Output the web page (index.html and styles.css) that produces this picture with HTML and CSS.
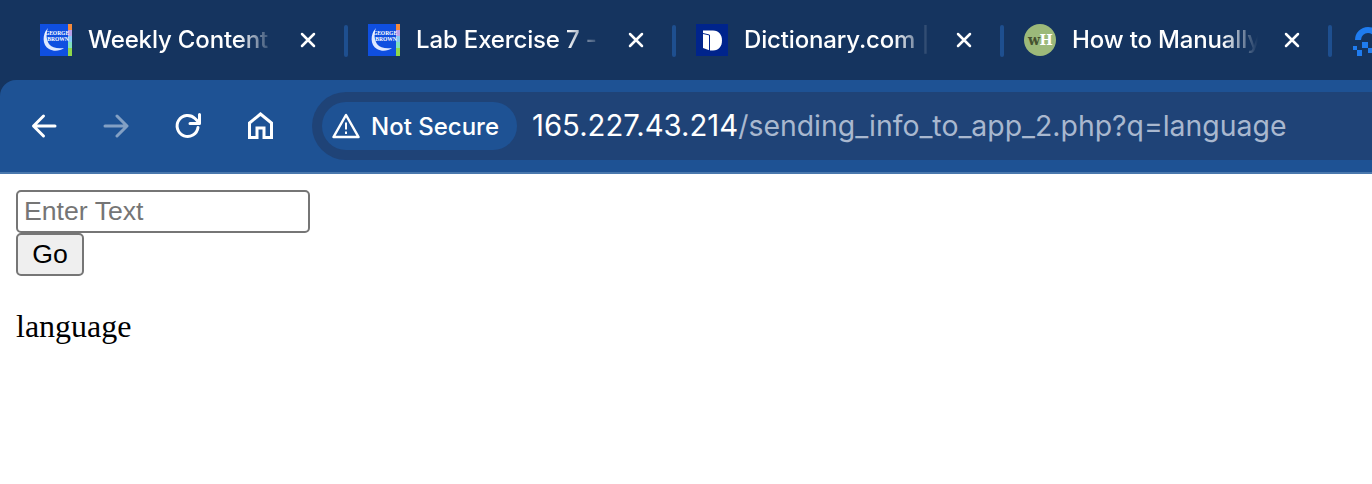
FILE: index.html
```html
<!DOCTYPE html>
<html lang="en">
<head>
  <meta charset="UTF-8" />
  <title>Sending info to app</title>
  <link rel="stylesheet" href="styles.css">
</head>
<body>

<div class="browser">
  <div class="tabs">
    <div class="tab">
      <svg class="favicon" viewBox="0 0 32 32">
        <rect width="32" height="32" fill="#0f4fe0"/>
        <rect x="28" width="4" height="6" fill="#f58a3c"/>
        <rect x="28" y="6" width="4" height="6" fill="#b9a0e8"/>
        <rect x="28" y="12" width="4" height="6" fill="#86c8f5"/>
        <rect x="28" y="18" width="4" height="6" fill="#7fe0c0"/>
        <rect x="28" y="24" width="4" height="8" fill="#8fd84a"/>
        <path d="M8 4C2 10 2 21 9 25c5 3 11 2 15-1-6 1-12 0-15-4C6 15 6 9 8 4z" fill="#dfe9ff"/>
        <text x="17" y="11" class="favicon-mark">GEORGE</text>
        <text x="18" y="17" class="favicon-mark">BROWN</text>
      </svg>
      <span class="tab-title">Weekly Content</span>
      <svg class="tab-close" viewBox="0 0 16 16"><path d="M2 2l12 12M14 2L2 14"/></svg>
    </div>
    <div class="tab">
      <svg class="favicon" viewBox="0 0 32 32">
        <rect width="32" height="32" fill="#0f4fe0"/>
        <rect x="28" width="4" height="6" fill="#f58a3c"/>
        <rect x="28" y="6" width="4" height="6" fill="#b9a0e8"/>
        <rect x="28" y="12" width="4" height="6" fill="#86c8f5"/>
        <rect x="28" y="18" width="4" height="6" fill="#7fe0c0"/>
        <rect x="28" y="24" width="4" height="8" fill="#8fd84a"/>
        <path d="M8 4C2 10 2 21 9 25c5 3 11 2 15-1-6 1-12 0-15-4C6 15 6 9 8 4z" fill="#dfe9ff"/>
        <text x="17" y="11" class="favicon-mark">GEORGE</text>
        <text x="18" y="17" class="favicon-mark">BROWN</text>
      </svg>
      <span class="tab-title">Lab Exercise 7 - Sending</span>
      <svg class="tab-close" viewBox="0 0 16 16"><path d="M2 2l12 12M14 2L2 14"/></svg>
    </div>
    <div class="tab">
      <svg class="favicon" viewBox="0 0 32 32">
        <rect width="32" height="32" fill="#00248c"/>
        <path d="M7 6.500H17C23 6.500 26 11 26 16.500S23 26.500 17 26.500H14L7 24z" fill="#fff"/>
        <path d="M7 9.500L13.500 11V27" fill="none" stroke="#00248c" stroke-width="1"/>
      </svg>
      <span class="tab-title">Dictionary.com | Meanings</span>
      <svg class="tab-close" viewBox="0 0 16 16"><path d="M2 2l12 12M14 2L2 14"/></svg>
    </div>
    <div class="tab">
      <svg class="favicon" viewBox="0 0 32 32">
        <circle cx="16" cy="16" r="16" fill="#9cb97a"/>
        <text x="10" y="21" class="wh-mark wh-dark">w</text>
        <text x="22" y="21" class="wh-mark wh-light">H</text>
      </svg>
      <span class="tab-title">How to Manually Install</span>
      <svg class="tab-close" viewBox="0 0 16 16"><path d="M2 2l12 12M14 2L2 14"/></svg>
    </div>
    <div class="tab">
      <svg class="favicon" viewBox="0 0 32 32">
        <path d="M3 16A13 13 0 0 1 29 16h-6A7 7 0 0 0 9 16z" fill="#1f7cf0"/>
        <path d="M1 22h4v4H1zM5 26h5v6H5zM10 18h6v6h-6zM16 24h5v5h-5z" fill="#1f7cf0"/>
      </svg>
    </div>
  </div>

  <div class="toolbar">
    <svg class="nav-icon" viewBox="0 0 28 28"><path d="M25 14H4.500M13.500 4L3.500 14l10 10"/></svg>
    <svg class="nav-icon nav-off" viewBox="0 0 28 28"><path d="M3 14h21M15 4l10 10-10 10"/></svg>
    <svg class="nav-icon" viewBox="0 0 28 28"><path d="M24 15.500A10.500 10.500 0 1 1 21 6.500L25 10.500"/><path d="M25.500 2.500V11.500H16"/></svg>
    <svg class="nav-icon nav-home" viewBox="0 0 28 28"><path d="M14.500 2L3.500 11V25.500H11V16H18V25.500H25.500V11z"/></svg>
    <div class="omnibox">
      <div class="security-chip">
        <svg class="warn-icon" viewBox="0 0 28 26">
          <path class="warn-outline" d="M14 2L1.500 24h25z"/>
          <path class="warn-mark" d="M14 9.500v7M14 18.500v2.500"/>
        </svg>
        <span>Not Secure</span>
      </div>
      <div class="url"><span class="url-host">165.227.43.214</span>/sending_info_to_app_2.php?q=language</div>
    </div>
  </div>
</div>

<main class="page">
  <form class="query-form">
    <input class="query-input" type="text" placeholder="Enter Text">
    <button class="go-button" type="button">Go</button>
  </form>
  <p class="result">language</p>
</main>

</body>
</html>
```

FILE: styles.css
```css
body {
  margin: 0;
  background: #fff;
  overflow: hidden;
}

/* Browser chrome */
.browser {
  background: #15345f;
  font-family: Inter, "Noto Sans", sans-serif;
  color: #fff;
}
.tabs {
  display: flex;
  height: 80px;
  overflow: hidden;
  padding-left: 20px;
}
.tab {
  flex: 0 0 328px;
  box-sizing: border-box;
  display: flex;
  align-items: center;
  gap: 16px;
  padding-left: 20px;
  height: 80px;
  position: relative;
}
.tab:not(:last-child)::after {
  content: "";
  position: absolute;
  right: 0;
  top: 25px;
  width: 4px;
  height: 32px;
  border-radius: 2px;
  background: #1e4f8f;
}
.favicon {
  flex: none;
  width: 32px;
  height: 32px;
  margin-top: -1px;
}
.favicon-mark {
  font: bold 5.500px "Liberation Serif", serif;
  fill: #fff;
  text-anchor: middle;
}
.wh-mark {
  font: bold 14px "DejaVu Serif", serif;
  text-anchor: middle;
}
.wh-dark { fill: #45512f; }
.wh-light { fill: #fff; }
.tab-title {
  flex: none;
  width: 186px;
  overflow: hidden;
  white-space: nowrap;
  font-size: 24px;
  font-weight: 500;
  letter-spacing: -0.15px;
  margin-top: -1px;
  -webkit-mask-image: linear-gradient(to right, #000 81%, transparent 100%);
  mask-image: linear-gradient(to right, #000 81%, transparent 100%);
}
.tab-close {
  flex: none;
  width: 16px;
  height: 16px;
  margin-left: 10px;
  margin-top: -1px;
  fill: none;
  stroke: #fff;
  stroke-width: 2.500;
  stroke-linecap: round;
}

/* Toolbar */
.toolbar {
  display: flex;
  align-items: center;
  height: 92px;
  padding-left: 30px;
  background: #1e5294;
  border-top-left-radius: 16px;
  border-bottom: 2px solid #4a78ad;
}
.nav-icon {
  flex: none;
  width: 28px;
  height: 28px;
  margin-right: 44px;
  fill: none;
  stroke: #fff;
  stroke-width: 3;
  stroke-linecap: round;
  stroke-linejoin: round;
}
.nav-off {
  opacity: 0.45;
}
.nav-home {
  stroke-linecap: butt;
  stroke-linejoin: miter;
}
.omnibox {
  flex: 1;
  display: flex;
  align-items: center;
  height: 68px;
  margin-left: -6px;
  padding-left: 10px;
  border-radius: 34px 0 0 34px;
  background: #1f4377;
}
.security-chip {
  display: flex;
  align-items: center;
  gap: 11px;
  height: 48px;
  padding: 0 18px 0 10px;
  border-radius: 24px;
  background: #1e5294;
  font-size: 24px;
  font-weight: 500;
}
.warn-icon {
  flex: none;
  width: 28px;
  height: 26px;
}
.warn-outline {
  fill: none;
  stroke: #fff;
  stroke-width: 2.500;
  stroke-linejoin: round;
}
.warn-mark {
  fill: none;
  stroke: #fff;
  stroke-width: 2;
}
.url {
  margin-left: 15px;
  margin-top: -1px;
  font-size: 28.400px;
  white-space: nowrap;
  color: #a9b8cf;
}
.url-host {
  font-size: 29.300px;
  color: #fff;
}

/* Page content */
.page {
  padding: 16px;
  font-family: "Liberation Serif", "Times New Roman", serif;
}
.query-form {
  display: flex;
  flex-direction: column;
  align-items: flex-start;
}
.query-input {
  box-sizing: border-box;
  width: 294px;
  height: 43px;
  margin: 0;
  padding: 2px 6px;
  border: 2px solid #767676;
  border-radius: 5px;
  font: 26.670px "Liberation Sans", Arial, sans-serif;
  outline: none;
}
.query-input::placeholder {
  color: #757575;
}
.go-button {
  box-sizing: border-box;
  width: 68px;
  height: 43px;
  margin: 0;
  padding: 0;
  border: 2px solid #767676;
  border-radius: 5px;
  background: #efefef;
  color: #000;
  font: 26.670px "Liberation Sans", Arial, sans-serif;
}
.result {
  margin: 32px 0 0;
  font-size: 32px;
  line-height: 37px;
  color: #000;
}
```
